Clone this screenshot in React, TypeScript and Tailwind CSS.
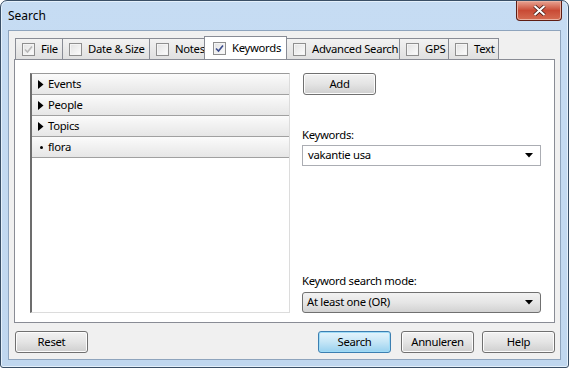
import React from "react";

const font = { fontFamily: '"Noto Sans", "Open Sans", sans-serif' };
const txt = "text-[11.3px] tracking-[-0.3px] whitespace-nowrap text-black";

function Check({ checked, disabled }: { checked?: boolean; disabled?: boolean }) {
  return (
    <span className="w-[13px] h-[13px] border border-[#8f8f8f] bg-gradient-to-br from-[#dcdcdc] to-[#fbfbfb] flex items-center justify-center shrink-0">
      <span className="w-[11px] h-[11px] border border-[#f4f4f4] bg-gradient-to-br from-[#e4e4e4] to-[#fafafa] flex items-center justify-center">
        {checked && (
          <svg width="9" height="9" viewBox="0 0 9 9">
            <path
              d="M1 4.5 L3.5 7 L8 1.5"
              fill="none"
              stroke={disabled ? "#b8b8b8" : "#3b4c8c"}
              strokeWidth="1.6"
            />
          </svg>
        )}
      </span>
    </span>
  );
}

function Tab({ label, checked, disabled, active, w }: { label: string; checked?: boolean; disabled?: boolean; active?: boolean; w: string }) {
  if (active) {
    return (
      <div className={`${w} h-[24px] -mb-px z-10 border border-b-0 border-[#898c95] bg-white flex items-center gap-[6px] pl-[8px] shrink-0 ${txt}`}>
        <Check checked={checked} />
        <span>{label}</span>
      </div>
    );
  }
  return (
    <div className={`${w} h-[21px] border border-b-0 border-[#898c95] bg-gradient-to-b from-[#f2f2f2] to-[#e0e0e0] flex items-center gap-[6px] pl-[6px] -mr-px shrink-0 ${txt}`}>
      <Check checked={checked} disabled={disabled} />
      <span>{label}</span>
    </div>
  );
}

function Btn({ label, primary, w = "w-[73px]" }: { label: string; primary?: boolean; w?: string }) {
  return (
    <div
      className={`${w} h-[22px] rounded-[3px] border flex items-center justify-center ${txt} ${
        primary
          ? "border-[#3c7fb1] bg-gradient-to-b from-[#e5f4fc] via-[#c4e5f6] to-[#98d1ef] shadow-[inset_0_0_0_1px_#9fdcf7]"
          : "border-[#707070] bg-gradient-to-b from-[#f2f2f2] via-[#e4e4e4] to-[#cfcfcf] shadow-[inset_0_0_0_1px_#fcfcfc]"
      }`}
    >
      {label}
    </div>
  );
}

function Arrow() {
  return (
    <svg width="8" height="5" viewBox="0 0 8 5">
      <path d="M0 0 H8 L4 4.5 Z" fill="#000" />
    </svg>
  );
}

function Row({ label, leaf }: { label: string; leaf?: boolean }) {
  return (
    <div className={`h-[21px] flex items-center gap-[4px] pl-[6px] border-b border-[#a0a0a0] bg-gradient-to-b from-[#fbfbfb] to-[#e6e6e6] ${txt}`}>
      {leaf ? (
        <span className="w-[6px] flex justify-center">
          <span className="w-[3px] h-[3px] rounded-full bg-black" />
        </span>
      ) : (
        <svg width="6" height="9" viewBox="0 0 6 9">
          <path d="M0 0 L5.5 4.5 L0 9 Z" fill="#000" />
        </svg>
      )}
      <span>{label}</span>
    </div>
  );
}

export default function App() {
  return (
    <div style={font} className="w-[569px] h-[368px] overflow-hidden">
      <div className="w-[569px] h-[368px] rounded-t-[7px] rounded-b-[3px] border border-[#3a4f66] bg-gradient-to-b from-[#c6dcf3] to-[#c0d7ef] flex flex-col shadow-[inset_0_0_0_1px_#e4f0fb]">
        <div className="h-[28px] flex items-start justify-between shrink-0">
          <span className="pl-[7px] pt-[6px] text-[12px] text-black">Search</span>
          <div className="mr-[6px] w-[46px] h-[20px] rounded-b-[4px] border border-t-0 border-[#5e1d14] bg-gradient-to-b from-[#e8a393] via-[#c94a35] to-[#d56c52] flex items-center justify-center shadow-[inset_0_0_0_1px_#eab0a0]">
            <svg width="13" height="11" viewBox="0 0 13 11">
              <path d="M1.5 1 L11.5 10 M11.5 1 L1.5 10" stroke="#3a1410" strokeWidth="3.6" />
              <path d="M1.5 1 L11.5 10 M11.5 1 L1.5 10" stroke="#fff" strokeWidth="2.2" />
            </svg>
          </div>
        </div>
        <div className="mx-[7px] mb-[7px] mt-[1px] flex-1 border border-[#8ea4bd] bg-[#f0f0f0] flex flex-col px-[5px] pt-[4px]">
          <div className="flex items-end h-[24px] pl-[1px]">
            <Tab label="File" checked disabled w="w-[48px]" />
            <Tab label="Date & Size" w="w-[88px]" />
            <Tab label="Notes" w="w-[57px]" />
            <div className="-ml-[1px]">
              <Tab label="Keywords" checked active w="w-[83px]" />
            </div>
            <div className="-ml-[1px]">
              <Tab label="Advanced Search" w="w-[114px]" />
            </div>
            <Tab label="GPS" w="w-[50px]" />
            <Tab label="Text" w="w-[51px]" />
          </div>
          <div className="h-[264px] border border-[#898c95] bg-white flex gap-[12px] pl-[15px] pt-[13px] pb-[9px]">
            <div className="w-[260px] h-[240px] border-l-2 border-t border-r border-b border-l-[#6d6d6d] border-t-[#9a9a9a] border-r-[#dcdcdc] border-b-[#dcdcdc] flex flex-col">
              <Row label="Events" />
              <Row label="People" />
              <Row label="Topics" />
              <Row label="flora" leaf />
            </div>
            <div className="w-[239px] flex flex-col">
              <div className="pl-[1px]">
                <Btn label="Add" />
              </div>
              <span className={`mt-[32px] leading-[16px] ${txt}`}>Keywords:</span>
              <div className={`mt-[2px] h-[21px] border border-[#abadb3] bg-white flex items-center justify-between pl-[5px] pr-[7px] ${txt}`}>
                <span>vakantie usa</span>
                <Arrow />
              </div>
              <div className="flex-1" />
              <span className={`leading-[16px] ${txt}`}>Keyword search mode:</span>
              <div className={`mt-[3px] h-[21px] rounded-[3px] border border-[#707070] bg-gradient-to-b from-[#f2f2f2] via-[#e6e6e6] to-[#d2d2d2] flex items-center justify-between pl-[4px] pr-[7px] ${txt}`}>
                <span>At least one (OR)</span>
                <Arrow />
              </div>
            </div>
          </div>
          <div className="flex items-center mt-[8px] pl-[1px]">
            <Btn label="Reset" />
            <div className="flex-1" />
            <Btn label="Search" primary />
            <div className="w-[10px]" />
            <Btn label="Annuleren" />
            <div className="w-[8px]" />
            <Btn label="Help" />
          </div>
        </div>
      </div>
    </div>
  );
}
